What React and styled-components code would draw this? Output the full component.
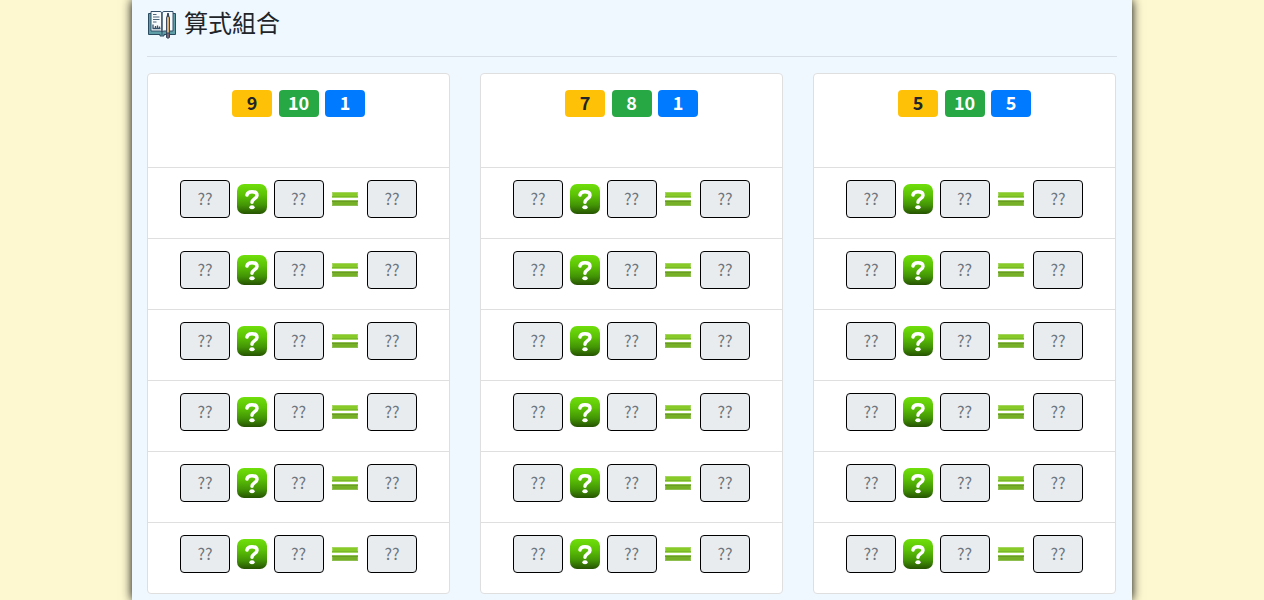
import React from "react";
import styled, { createGlobalStyle } from "styled-components";

const GlobalStyle = createGlobalStyle`
  *, *::before, *::after { box-sizing: border-box; }
  body {
    margin: 0;
    background: #fef8d0;
    color: #212529;
    font-family: "Noto Sans CJK TC", "Noto Sans", sans-serif;
    font-size: 16px;
    line-height: 24px;
  }
`;

const Page = styled.main`
  max-width: 1000px;
  min-height: 100vh;
  margin: 0 auto;
  padding: 8px 15px 0;
  background: #f0f8ff;
  box-shadow: 0 0 10px #000;
`;

const TitleBar = styled.header`
  display: flex;
  align-items: flex-start;
  gap: 7px;
  height: 49px;
  margin-bottom: 16px;
  border-bottom: 1px solid #d9dfe6;
`;

const Title = styled.h1`
  margin: 0;
  font-size: 24px;
  font-weight: 400;
  line-height: 28px;
`;

const Cards = styled.div`
  display: grid;
  grid-template-columns: repeat(3, 1fr);
  gap: 30px;
  padding-right: 1px;
`;

const Card = styled.section`
  background: #fff;
  border: 1px solid #dfdfdf;
  border-radius: 4px;
`;

const CardHead = styled.div`
  height: 93px;
  padding-top: 16px;
`;

const Badges = styled.div`
  display: flex;
  justify-content: space-between;
  width: 133px;
  margin: 0 auto;
`;

const Badge = styled.span`
  width: 40px;
  height: 27px;
  border-radius: 4px;
  background: ${(p) => p.$bg};
  color: ${(p) => p.$fg || "#fff"};
  font-size: 18px;
  font-weight: 700;
  line-height: 24px;
  text-align: center;
`;

const Row = styled.div`
  padding: 12px 32px 20px;
  border-top: 1px solid #dfdfdf;
`;

const Equation = styled.div`
  display: flex;
  align-items: center;
  justify-content: space-between;
  max-width: 237px;
  margin: 0 auto;
`;

const Box = styled.input`
  width: 50px;
  height: 38px;
  padding: 5px 6px 7px;
  border: 1px solid #000;
  border-radius: 4px;
  background: #e9ecef;
  color: #495057;
  font: inherit;
  text-align: center;
  &::placeholder { color: #6c757d; opacity: 1; }
`;

const OperatorButton = styled.button`
  display: block;
  width: 30px;
  height: 30px;
  padding: 0;
  border: 0;
  background: none;
  cursor: pointer;
`;

const Icon = styled.svg`
  display: block;
  flex: none;
`;

function BookIcon() {
  return (
    <Icon width="30" height="32" viewBox="0 0 30 32" aria-hidden="true">
      <path d="M1.500 5.500h27v21H17v1.500h-4v-1.500H1.500z" fill="#5f9ea6" stroke="#2b4b61" strokeLinejoin="round" />
      <path d="M4 3.500h9q1.500 0 2 1.500v19q-1-1-2-1H4z" fill="#f7fbfd" stroke="#35506a" />
      <path d="M26 3.500h-9q-1.500 0-2 1.500v19q1-1 2-1h9z" fill="#f7fbfd" stroke="#35506a" />
      <path d="M6 6.500h3.500M6 9h6.500M6 11.500h6.500M6 14h3.500" stroke="#4a657a" fill="none" />
      <path d="M5.500 20.500h8M6 20.500v-4M8.500 20.500v-2.500M10.500 20.500v-3M12.500 20.500v-2" stroke="#35506a" strokeWidth="1.300" fill="none" />
      <path d="M15 5v22" stroke="#35506a" />
      <path d="M19.500 10l1.500-4.500L22.500 10v16h-3z" fill="#d9b27c" stroke="#3e4b5d" strokeLinejoin="round" />
      <path d="M19.500 25h3v4.500q-1.500 1.500-3 0z" fill="#7c6570" stroke="#34445a" />
      <path d="M21 5v4" stroke="#2c3e55" strokeWidth="1.500" />
    </Icon>
  );
}

function QuestionIcon() {
  return (
    <Icon width="30" height="30" viewBox="0 0 30 30" aria-hidden="true">
      <defs>
        <linearGradient id="questionFill" x1="0" y1="0" x2="0" y2="1">
          <stop offset="0" stopColor="#70df0b" />
          <stop offset="0.350" stopColor="#5cc305" />
          <stop offset="0.700" stopColor="#439605" />
          <stop offset="1" stopColor="#265303" />
        </linearGradient>
      </defs>
      <rect width="30" height="30" rx="7" fill="url(#questionFill)" />
      <path d="M10 11C10.300 8.700 12.300 7.700 15 7.700c3 0 5 1.300 5 3.700 0 3.200-4.900 3.200-5 6.900" fill="none" stroke="#fff" strokeWidth="3.500" strokeLinecap="round" />
      <ellipse cx="15" cy="23.200" rx="2.700" ry="2" fill="#fff" />
    </Icon>
  );
}

function EqualsIcon() {
  return (
    <Icon width="30" height="30" viewBox="0 0 30 30" role="img" aria-label="=">
      <rect x="2" y="8" width="26" height="6" fill="#a5d660" />
      <rect x="3" y="9" width="24" height="4" fill="#88cb28" />
      <rect x="2" y="12" width="26" height="1" fill="#79b82a" />
      <rect x="2" y="16" width="26" height="6" fill="#8fbf50" />
      <rect x="3" y="17" width="24" height="4" fill="#76b026" />
      <rect x="2" y="17" width="26" height="1" fill="#689c24" />
    </Icon>
  );
}

const puzzles = [
  [9, 10, 1],
  [7, 8, 1],
  [5, 10, 5],
];
const rows = [1, 2, 3, 4, 5, 6];

function EquationRow({ label }) {
  return (
    <Row>
      <Equation>
        <Box placeholder="??" aria-label={`${label} a`} readOnly />
        <OperatorButton type="button" aria-label={`${label} +/−`}>
          <QuestionIcon />
        </OperatorButton>
        <Box placeholder="??" aria-label={`${label} b`} readOnly />
        <EqualsIcon />
        <Box placeholder="??" aria-label={`${label} c`} readOnly />
      </Equation>
    </Row>
  );
}

export default function App() {
  return (
    <>
      <GlobalStyle />
      <Page>
        <TitleBar>
          <BookIcon />
          <Title>算式組合</Title>
        </TitleBar>
        <Cards>
          {puzzles.map(([a, b, c], i) => (
            <Card key={i}>
              <CardHead>
                <Badges>
                  <Badge $bg="#ffc107" $fg="#212529">{a}</Badge>
                  <Badge $bg="#28a745">{b}</Badge>
                  <Badge $bg="#007bff">{c}</Badge>
                </Badges>
              </CardHead>
              {rows.map((n) => (
                <EquationRow key={n} label={`${i + 1}-${n}`} />
              ))}
            </Card>
          ))}
        </Cards>
      </Page>
    </>
  );
}
